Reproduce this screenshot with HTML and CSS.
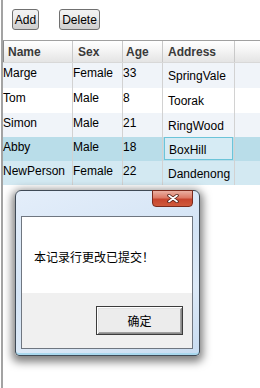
FILE: index.html
```html
<!DOCTYPE html>
<html lang="zh">
<head>
    <meta charset="UTF-8">
    <title>DataGrid</title>
    <link rel="stylesheet" href="styles.css">
</head>
<body>

    <div class="page">
        <!-- Toolbar -->
        <div class="toolbar">
            <button class="btn btn-add">Add</button>
            <button class="btn btn-delete">Delete</button>
        </div>

        <!-- Data Grid -->
        <div class="grid">
            <div class="row head">
                <div class="cell">Name</div>
                <div class="cell">Sex</div>
                <div class="cell age">Age</div>
                <div class="cell">Address</div>
                <div class="cell fill"></div>
            </div>
            <div class="row alt tall">
                <div class="cell">Marge</div>
                <div class="cell">Female</div>
                <div class="cell">33</div>
                <div class="cell addr">SpringVale</div>
                <div class="cell fill"></div>
            </div>
            <div class="row tall">
                <div class="cell">Tom</div>
                <div class="cell">Male</div>
                <div class="cell">8</div>
                <div class="cell addr">Toorak</div>
                <div class="cell fill"></div>
            </div>
            <div class="row alt">
                <div class="cell">Simon</div>
                <div class="cell">Male</div>
                <div class="cell">21</div>
                <div class="cell addr">RingWood</div>
                <div class="cell fill"></div>
            </div>
            <div class="row selected">
                <div class="cell">Abby</div>
                <div class="cell">Male</div>
                <div class="cell">18</div>
                <div class="cell addr current"><span>BoxHill</span></div>
                <div class="cell fill"></div>
            </div>
            <div class="row hover">
                <div class="cell">NewPerson</div>
                <div class="cell">Female</div>
                <div class="cell">22</div>
                <div class="cell addr">Dandenong</div>
                <div class="cell fill"></div>
            </div>
        </div>
    </div>

    <!-- Message Box -->
    <div class="msgbox">
        <div class="msg-title">
            <span class="close">
                <svg width="12" height="9" viewBox="0 0 12 9">
                    <path d="M2 1.5 L10 7.5 M10 1.5 L2 7.5" stroke="#4a1a12" stroke-width="3.4" stroke-linecap="round"/>
                    <path d="M2 1.5 L10 7.5 M10 1.5 L2 7.5" stroke="#ffffff" stroke-width="1.8" stroke-linecap="round"/>
                </svg>
            </span>
        </div>
        <div class="msg-body">
            <div class="msg-text">本记录行更改已提交！</div>
            <div class="msg-foot">
                <button class="ok">确定</button>
            </div>
        </div>
    </div>

</body>
</html>
```

FILE: styles.css
```css
/* General Styles */
* {
    margin: 0;
    padding: 0;
    box-sizing: border-box;
}

body {
    font-family: 'Liberation Sans', Arial, sans-serif;
    font-size: 12px;
    background-color: #fff;
    color: #000;
    width: 260px;
    height: 388px;
    overflow: hidden;
}

.page {
    margin-left: 1px;
    height: 388px;
    border-left: 2px solid #a3a3a3;
}

/* Toolbar */
.toolbar {
    display: flex;
    gap: 20px;
    padding: 9px 0 10px 9px;
}

.btn {
    height: 21px;
    font-family: 'Liberation Sans', Arial, sans-serif;
    font-size: 12px;
    color: #000;
    border: 1px solid #707070;
    border-radius: 3px;
    background: linear-gradient(#f2f2f2 0%, #ebebeb 50%, #dddddd 51%, #cfcfcf 100%);
}

.btn-add {
    width: 27px;
}

.btn-delete {
    width: 41px;
}

/* Grid */
.grid {
    border-top: 1px solid #a0a0a0;
}

.row {
    display: grid;
    grid-template-columns: 70px 50px 40px 72px 1fr;
    height: 24px;
}

.row.tall {
    height: 25px;
}

.cell {
    border-right: 1px solid #d2d2d2;
    padding-top: 3px;
    line-height: 14px;
    white-space: nowrap;
    overflow: hidden;
}

.cell.fill {
    border-right: none;
}

.cell.addr {
    padding: 6px 0 0 5px;
}

.head {
    height: 22px;
    background: linear-gradient(#ffffff 0%, #f3f3f3 50%, #e4e4e4 100%);
    border-bottom: 1px solid #d8d8d8;
}

.head .cell {
    font-weight: bold;
    color: #3a3a3a;
    padding: 4px 0 0 5px;
    border-right-color: #c9c9c9;
}

.head .cell:first-child {
    border-left: 1px solid #8a8a8a;
    padding-left: 4px;
}

.head .cell.age {
    padding-left: 3px;
}

.alt {
    background-color: #f0f4f9;
}

.selected {
    background-color: #b9dde9;
}

.hover {
    background-color: #d3e9f2;
}

.cell.current {
    padding: 0 1px 1px 1px;
}

.cell.current span {
    display: block;
    height: 23px;
    padding: 5px 0 0 4px;
    background-color: #d6ebf4;
    border: 1px solid #6cc4d9;
}

/* Message Box */
.msgbox {
    position: absolute;
    left: 15px;
    top: 190px;
    width: 185px;
    height: 166px;
    padding: 0 6px 6px 5px;
    border: 1px solid #3f4a56;
    border-radius: 6px 6px 4px 4px;
    background: linear-gradient(160deg, #e4eefa 0%, #d4e4f5 45%, #dce9f7 70%, #c8dcf1 100%);
    box-shadow: 0 3px 9px 3px rgba(0, 0, 0, 0.5), inset 0 -2px 0 #a9d8ee;
}

.msg-title {
    height: 25px;
    position: relative;
}

.close {
    position: absolute;
    right: 0;
    top: -1px;
    width: 41px;
    height: 17px;
    display: flex;
    justify-content: center;
    align-items: center;
    border: 1px solid #7a2a1c;
    border-radius: 0 0 4px 4px;
    background: linear-gradient(#eab0a2 0%, #dc7a66 45%, #c7452e 55%, #cf5a3c 100%);
}

.msg-body {
    height: 133px;
    border: 1px solid #6f7680;
    display: flex;
    flex-direction: column;
}

.msg-text {
    height: 76px;
    background-color: #fff;
    padding: 32px 0 0 12px;
    font-family: 'Noto Sans CJK SC', sans-serif;
    font-size: 12px;
    line-height: 16px;
    color: #000;
}

.msg-foot {
    flex: 1;
    background-color: #f0f0f0;
    display: flex;
    justify-content: flex-end;
    align-items: flex-start;
    padding: 13px 9px 0 0;
}

.ok {
    width: 87px;
    height: 29px;
    font-family: 'Noto Sans CJK SC', sans-serif;
    font-size: 12px;
    color: #000;
    background-color: #ececec;
    border: 1px solid #3c3c3c;
    box-shadow: inset 1px 1px 0 #ffffff, inset -1px -1px 0 #8a8a8a, inset 2px 2px 0 #e3e3e3, inset -2px -2px 0 #a0a0a0;
}
```
